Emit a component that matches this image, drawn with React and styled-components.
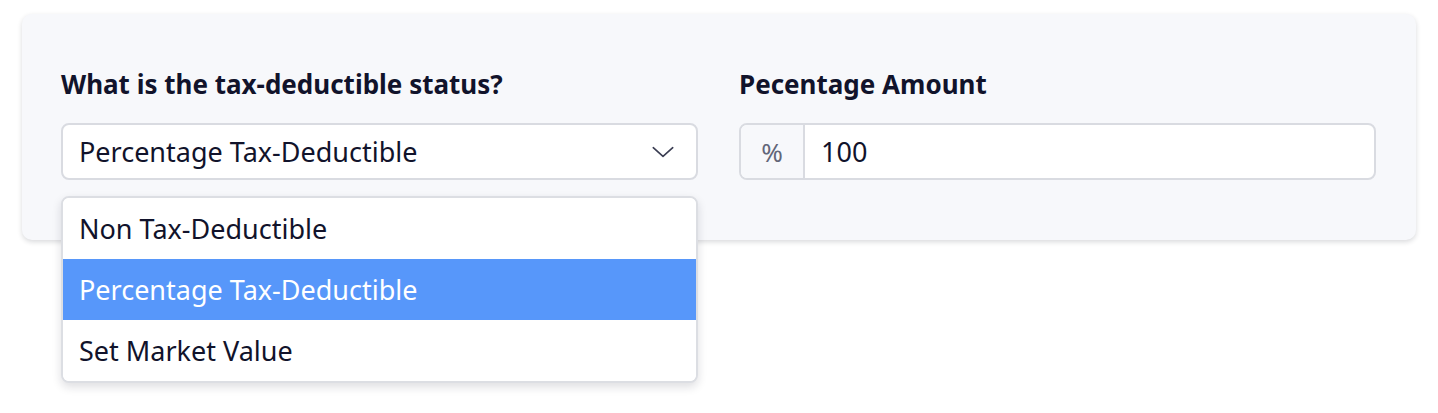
import React, { useState } from 'react';
import styled, { createGlobalStyle } from 'styled-components';

const GlobalStyle = createGlobalStyle`
  html, body {
    margin: 0;
    padding: 0;
    background: #ffffff;
  }
  body {
    font-family: "Noto Sans", Lato, sans-serif;
    color: #11132b;
  }
`;

const Page = styled.div`
  box-sizing: border-box;
  min-height: 413px;
  padding: 14px 22px 0 22px;
`;

const Card = styled.div`
  background: #f7f8fb;
  border-radius: 10px;
  box-shadow: 0 2px 5px rgba(20, 24, 40, 0.16);
  padding: 52px 40px 60px 39px;
  display: grid;
  grid-template-columns: 1fr 1fr;
  column-gap: 41px;
`;

const Field = styled.div`
  display: flex;
  flex-direction: column;
  gap: 21px;
  position: relative;
`;

const Label = styled.label`
  font-size: 26px;
  font-weight: 700;
  line-height: 36px;
  color: #11132b;
`;

const SelectBox = styled.div`
  height: 57px;
  box-sizing: border-box;
  background: #ffffff;
  border: 2px solid #d9dbe1;
  border-radius: 8px;
  display: flex;
  align-items: center;
  justify-content: space-between;
  padding: 0 20px 0 16px;
  font-size: 27px;
  cursor: pointer;
`;

const Chevron = styled.svg`
  width: 26px;
  height: 26px;
  color: #3a3d52;
`;

const Menu = styled.ul`
  position: absolute;
  top: 130px;
  left: 0;
  right: 0;
  margin: 0;
  padding: 0;
  list-style: none;
  background: #ffffff;
  border: 2px solid #dcdee3;
  border-radius: 8px;
  box-shadow: 0 4px 10px rgba(20, 24, 40, 0.14);
  overflow: hidden;
  z-index: 10;
`;

const Option = styled.li`
  height: 61px;
  display: flex;
  align-items: center;
  padding: 0 16px;
  font-size: 27px;
  background: ${(p) => (p.$active ? '#5797fa' : '#ffffff')};
  color: ${(p) => (p.$active ? '#ffffff' : '#11132b')};
`;

const InputGroup = styled.div`
  height: 57px;
  box-sizing: border-box;
  display: flex;
  background: #ffffff;
  border: 2px solid #d9dbe1;
  border-radius: 8px;
  overflow: hidden;
`;

const Addon = styled.span`
  width: 62px;
  display: flex;
  align-items: center;
  justify-content: center;
  background: #f7f8fb;
  border-right: 2px solid #d9dbe1;
  font-size: 26px;
  color: #626679;
`;

const Input = styled.input`
  flex: 1;
  border: none;
  outline: none;
  padding: 0 16px;
  font-family: inherit;
  font-size: 27px;
  color: #11132b;
  background: transparent;
`;

const options = ['Non Tax-Deductible', 'Percentage Tax-Deductible', 'Set Market Value'];

const App = () => {
  const [selected, setSelected] = useState('Percentage Tax-Deductible');
  const [amount, setAmount] = useState('100');

  return (
    <>
      <GlobalStyle />
      <Page>
        <Card>
          <Field>
            <Label>What is the tax-deductible status?</Label>
            <SelectBox>
              {selected}
              <Chevron viewBox="0 0 24 24" fill="none" stroke="currentColor" strokeWidth="1.5" strokeLinecap="round" strokeLinejoin="round">
                <path d="M3 8l9 8 9-8" />
              </Chevron>
            </SelectBox>
            <Menu>
              {options.map((o) => (
                <Option key={o} $active={o === selected} onClick={() => setSelected(o)}>
                  {o}
                </Option>
              ))}
            </Menu>
          </Field>
          <Field>
            <Label>Pecentage Amount</Label>
            <InputGroup>
              <Addon>%</Addon>
              <Input value={amount} onChange={(e) => setAmount(e.target.value)} />
            </InputGroup>
          </Field>
        </Card>
      </Page>
    </>
  );
};

export default App;
